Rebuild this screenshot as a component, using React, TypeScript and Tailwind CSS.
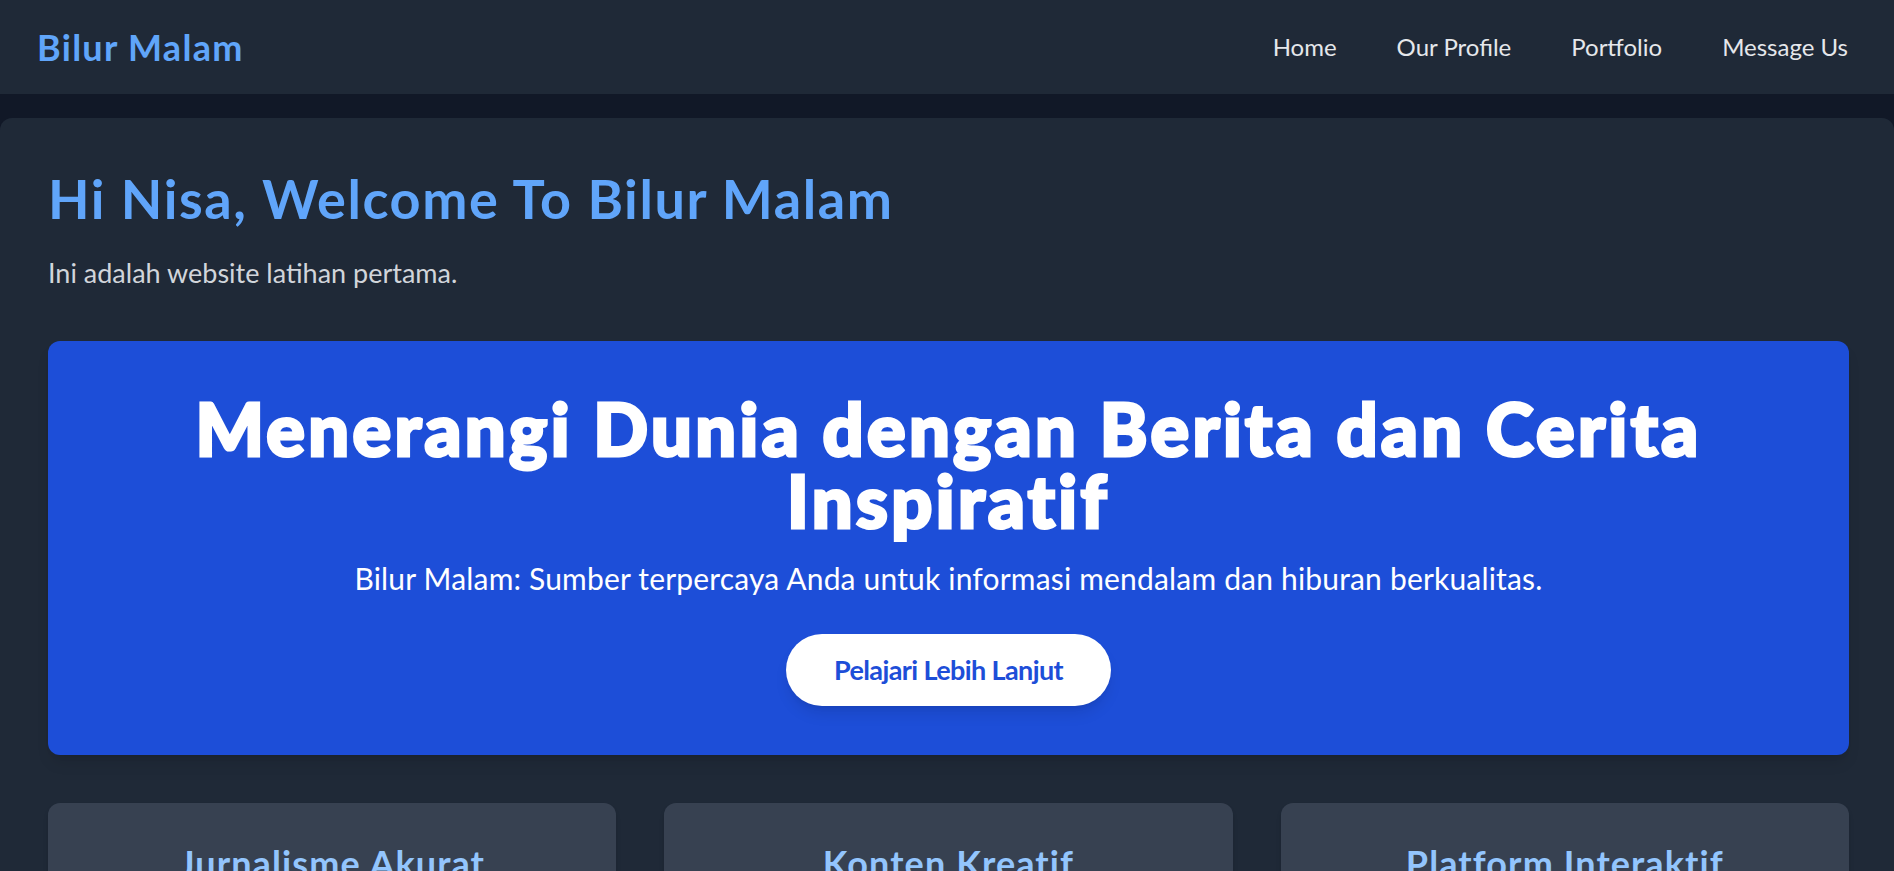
const links = ["Home", "Our Profile", "Portfolio", "Message Us"]

const features = [
  { title: "Jurnalisme Akurat" },
  { title: "Konten Kreatif" },
  { title: "Platform Interaktif" },
]

export default function App() {
  return (
    <div className="min-h-screen overflow-hidden bg-[#111827] font-['Lato',sans-serif]">
      <nav className="flex h-[94px] items-center justify-between bg-[#1f2937] pl-[37px] pr-[46px]">
        <span className="text-[36px] font-bold tracking-[1.3px] text-[#60a5fa]">Bilur Malam</span>
        <div className="flex gap-[60px] text-[24px] text-[#e5e7eb]">
          {links.map((link) => (
            <a key={link} href="#" className="hover:text-[#60a5fa]">
              {link}
            </a>
          ))}
        </div>
      </nav>

      <main className="mt-6 rounded-[12px] bg-[#1f2937] pb-12 pl-12 pr-[45px] pt-12 shadow-lg">
        <h1 className="text-[54px] font-bold leading-[66px] tracking-[1.6px] text-[#60a5fa]">
          Hi Nisa, Welcome To Bilur Malam
        </h1>
        <p className="mt-[21px] text-[27px] leading-[40px] text-[#d1d5db]">
          Ini adalah website latihan pertama.
        </p>

        <section className="mt-12 rounded-[12px] bg-[#1d4ed8] px-12 pb-[49px] pt-[51px] text-center text-white shadow-lg">
          <h2 className="text-[72px] font-black leading-[72px] tracking-[3.4px] [-webkit-text-stroke:3px_white]">
            Menerangi Dunia dengan Berita dan Cerita
            <br />
            Inspiratif
          </h2>
          <p className="mt-[21px] text-[30px] leading-[42px] tracking-[0.18px]">
            Bilur Malam: Sumber terpercaya Anda untuk informasi mendalam dan hiburan berkualitas.
          </p>
          <button className="mt-[35px] h-[72px] rounded-full bg-white px-12 text-[27px] font-bold tracking-[-0.6px] text-[#1d4ed8] shadow-lg">
            Pelajari Lebih Lanjut
          </button>
        </section>

        <div className="mt-12 grid grid-cols-3 gap-12">
          {features.map((f) => (
            <div key={f.title} className="rounded-[12px] bg-[#374151] p-9 text-center shadow-md">
              <h3 className="text-[36px] font-bold leading-[48px] tracking-[1.1px] text-[#93c5fd]">{f.title}</h3>
              <p className="mt-4 text-[24px] text-[#d1d5db]">
                Lorem ipsum dolor sit amet.
              </p>
            </div>
          ))}
        </div>
      </main>
    </div>
  )
}
